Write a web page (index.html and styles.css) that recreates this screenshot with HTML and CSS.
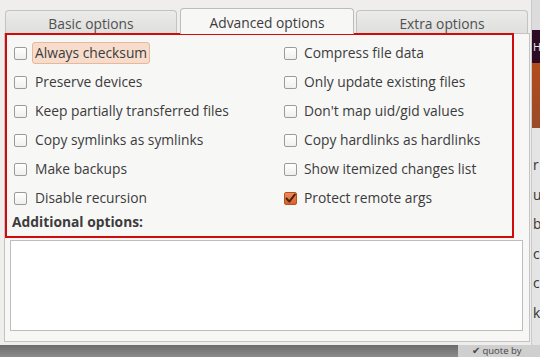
FILE: index.html
```html
<!DOCTYPE html>
<html lang="en">
<head>
    <meta charset="UTF-8">
    <meta name="viewport" content="width=device-width, initial-scale=1.0">
    <title>Advanced options</title>
    <link rel="stylesheet" href="styles.css">
</head>
<body>
    <div class="screen">
        <div class="window">
            <div class="tabs">
                <div class="tab tab-basic">Basic options</div>
                <div class="tab tab-active">Advanced options</div>
                <div class="tab tab-extra">Extra options</div>
            </div>

            <div class="page">
                <div class="marked">
                    <div class="options">
                        <label class="option">
                            <span class="check"></span>
                            <span class="option-text focused">Always checksum</span>
                        </label>
                        <label class="option">
                            <span class="check"></span>
                            <span class="option-text">Compress file data</span>
                        </label>
                        <label class="option">
                            <span class="check"></span>
                            <span class="option-text">Preserve devices</span>
                        </label>
                        <label class="option">
                            <span class="check"></span>
                            <span class="option-text">Only update existing files</span>
                        </label>
                        <label class="option">
                            <span class="check"></span>
                            <span class="option-text">Keep partially transferred files</span>
                        </label>
                        <label class="option">
                            <span class="check"></span>
                            <span class="option-text">Don't map uid/gid values</span>
                        </label>
                        <label class="option">
                            <span class="check"></span>
                            <span class="option-text">Copy symlinks as symlinks</span>
                        </label>
                        <label class="option">
                            <span class="check"></span>
                            <span class="option-text">Copy hardlinks as hardlinks</span>
                        </label>
                        <label class="option">
                            <span class="check"></span>
                            <span class="option-text">Make backups</span>
                        </label>
                        <label class="option">
                            <span class="check"></span>
                            <span class="option-text">Show itemized changes list</span>
                        </label>
                        <label class="option">
                            <span class="check"></span>
                            <span class="option-text">Disable recursion</span>
                        </label>
                        <label class="option">
                            <span class="check check-on">
                                <svg width="11" height="11" viewBox="0 0 11 11">
                                    <path d="M1.5 5.5 L4.3 8.6 L9.8 1.6" fill="none" stroke="#4a230f" stroke-width="2" stroke-linecap="round" stroke-linejoin="round"/>
                                </svg>
                            </span>
                            <span class="option-text">Protect remote args</span>
                        </label>
                    </div>
                    <div class="section-label">Additional options:</div>
                </div>
                <div class="textbox"></div>
            </div>
        </div>

        <div class="backdrop">
            <div class="bd-top"></div>
            <div class="bd-dark">H</div>
            <div class="bd-orange"></div>
            <div class="bd-text">r<br>u<br>b<br>c<br>c<br>k</div>
        </div>
    </div>

    <div class="taskbar">
        <div class="taskbar-left"></div>
        <div class="taskbar-right">✔ quote by</div>
    </div>
</body>
</html>
```

FILE: styles.css
```css
:root {
    --text-dark: #3c3c3c;
    --text-tab: #505050;
    --window-bg: #efeeed;
    --page-bg: #f7f7f6;
    --frame: #c3c3c3;
    --mark-red: #d10a0a;
}

* {
    margin: 0;
    padding: 0;
    box-sizing: border-box;
}

body {
    width: 540px;
    height: 357px;
    overflow: hidden;
    font-family: "Open Sans", "Noto Sans", sans-serif;
    font-size: 13.8px;
    color: var(--text-dark);
    background: var(--window-bg);
}

.screen {
    display: flex;
    height: 345px;
}

/* dialog window */
.window {
    width: 532px;
    background: var(--window-bg);
    border-right: 1px solid #c9c9c9;
}

.tabs {
    display: flex;
    align-items: flex-end;
    height: 33px;
    padding-left: 5px;
}

.tab {
    height: 23px;
    width: 172px;
    border: 1px solid var(--frame);
    border-bottom: none;
    border-radius: 4px 4px 0 0;
    background: linear-gradient(#ebebea, #dfdfde);
    color: var(--text-tab);
    text-align: center;
    line-height: 25px;
}

.tab-active {
    position: relative;
    z-index: 1;
    width: 174px;
    height: 26px;
    margin: 0 2px -1px 3px;
    background: var(--page-bg);
    color: var(--text-dark);
    line-height: 27px;
    border-color: #bcbcbc;
}

.page {
    width: 526px;
    margin-left: 4px;
    padding-bottom: 10px;
    border: 1px solid var(--frame);
    background: var(--page-bg);
}

/* red annotation frame */
.marked {
    width: 509px;
    margin-top: -1px;
    border: 2px solid var(--mark-red);
    padding: 3.5px 0 5px 0;
}

.options {
    display: grid;
    grid-template-columns: 270px 1fr;
    grid-auto-rows: 29px;
    padding-left: 7px;
}

.option {
    display: flex;
    align-items: center;
    gap: 8px;
    white-space: nowrap;
}

.option:nth-child(even) {
    gap: 7px;
}

.check {
    display: inline-flex;
    align-items: center;
    justify-content: center;
    width: 13px;
    height: 13px;
    border: 1px solid #9b9b9b;
    border-radius: 2px;
    background: linear-gradient(#ffffff, #efefef);
    flex-shrink: 0;
}

.check-on {
    border-color: #b4531f;
    background: linear-gradient(#f28a5a, #d9622f);
}

.option-text {
    line-height: 18px;
}

.focused {
    margin-left: -3px;
    padding: 1px 2px;
    background: #f7dccc;
    border: 1px solid #e6b89c;
    border-radius: 3px;
}

.section-label {
    margin-left: 5px;
    font-weight: bold;
    line-height: 18px;
}

.textbox {
    width: 513px;
    height: 91px;
    margin: 2px 0 0 5px;
    background: #ffffff;
    border: 1px solid #bdbdbd;
}

/* window behind the dialog */
.backdrop {
    width: 8px;
    display: flex;
    flex-direction: column;
    overflow: hidden;
}

.bd-top {
    height: 30px;
    background: #dcdcdc;
}

.bd-dark {
    height: 33px;
    background: #2e0b24;
    color: #e8e8e8;
    padding: 8px 0 0 1px;
    font-size: 11px;
    line-height: 18px;
}

.bd-orange {
    height: 65px;
    background: linear-gradient(#b44c1b, #9a4a2a);
}

.bd-text {
    flex: 1;
    background: #e4e4e4;
    color: #333;
    padding: 22px 0 0 1px;
    line-height: 29.5px;
}

.taskbar {
    display: flex;
    height: 12px;
}

.taskbar-left {
    flex: 1;
    background: linear-gradient(#6b6b6b, #8c8c8c);
}

.taskbar-right {
    width: 82px;
    background: #cfcfcf;
    color: #444;
    font-size: 9.5px;
    line-height: 12px;
    padding-left: 14px;
    white-space: nowrap;
    overflow: hidden;
}
```
